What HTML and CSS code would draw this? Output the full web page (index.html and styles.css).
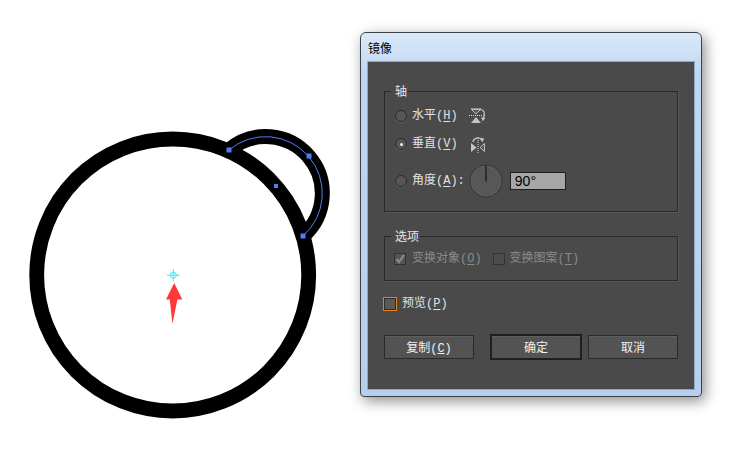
FILE: index.html
```html
<!DOCTYPE html>
<html lang="zh">
<head>
<meta charset="utf-8">
<title>镜像</title>
<link rel="stylesheet" href="styles.css">
</head>
<body>
<div class="page">
  <svg class="art" width="360" height="476" viewBox="0 0 360 476">
    <circle cx="172.7" cy="275" r="136" fill="none" stroke="#000" stroke-width="14.8"/>
    <path d="M229 150 A56.73 56.73 0 0 1 303 236" fill="none" stroke="#000" stroke-width="15"/>
    <path d="M229 150 A56.73 56.73 0 0 1 303 236" fill="none" stroke="#4f7ef2" stroke-width="1"/>
    <rect x="226.5" y="147.5" width="5" height="5" fill="#4f7ef2"/>
    <rect x="306.5" y="153.5" width="5" height="5" fill="#4f7ef2"/>
    <rect x="300.5" y="233.5" width="5" height="5" fill="#4f7ef2"/>
    <rect x="274" y="184" width="4" height="4" fill="#4f7ef2"/>
    <g stroke="#3ee6f2" stroke-width="1" fill="none">
      <circle cx="173.3" cy="275.2" r="3"/>
      <line x1="167" y1="275.2" x2="179.6" y2="275.2"/>
      <line x1="173.3" y1="269" x2="173.3" y2="281.4"/>
    </g>
    <polygon points="174.2,283 182.3,299.5 177.4,299.5 172.4,324 169.8,299.5 166,299.5" fill="#ff3838"/>
  </svg>

  <div class="dialog">
    <div class="titlebar">镜像</div>
    <div class="panel">
      <fieldset class="group axis">
        <legend>轴</legend>
        <div class="row row-h">
          <span class="radio"></span>
          <span class="label">水平(<u>H</u>)</span>
          <svg class="icon icon-h" width="17" height="16" viewBox="0 0 17 16">
            <line x1="2" y1="1" x2="12" y2="1" stroke="#d8d8d8" stroke-width="1"/>
            <polygon points="2.5,1.5 11.5,1.5 7,6" fill="#5c5c5c" stroke="#bdbdbd" stroke-width="1"/>
            <line x1="0" y1="7.5" x2="13" y2="7.5" stroke="#e0e0e0" stroke-width="1" stroke-dasharray="1 1"/>
            <polygon points="2,15 12,15 7,9" fill="#c4c4c4"/>
            <path d="M11 1.5 C15 1.5 16.5 5 14.6 10" fill="none" stroke="#c8c8c8" stroke-width="1.2"/>
            <polygon points="12.2,9.2 16.4,10 13.6,13.2" fill="#c8c8c8"/>
          </svg>
        </div>
        <div class="row row-v">
          <span class="radio checked"></span>
          <span class="label">垂直(<u>V</u>)</span>
          <svg class="icon icon-v" width="17" height="18" viewBox="0 0 17 18">
            <path d="M4 7 C4.5 3 9.5 1.5 13 4.5" fill="none" stroke="#c8c8c8" stroke-width="1.2"/>
            <polygon points="10.6,3.4 15,3.2 13.6,7.2" fill="#c8c8c8"/>
            <polygon points="2,8 2,17 7.5,12.5" fill="#c4c4c4"/>
            <line x1="9" y1="3" x2="9" y2="18" stroke="#e0e0e0" stroke-width="1" stroke-dasharray="1 1"/>
            <polygon points="15.5,8.5 15.5,16.5 11,12.5" fill="#5c5c5c" stroke="#bdbdbd" stroke-width="1"/>
          </svg>
        </div>
        <div class="row row-angle">
          <span class="radio"></span>
          <span class="label">角度(<u>A</u>):</span>
          <svg class="dial" width="34" height="34" viewBox="0 0 34 34">
            <circle cx="17" cy="17" r="16" fill="#575757" stroke="#333" stroke-width="1"/>
            <circle cx="17" cy="17" r="15" fill="none" stroke="#606060" stroke-width="1"/>
            <line x1="17" y1="17.5" x2="17" y2="1.5" stroke="#1c1c1c" stroke-width="1.4"/>
          </svg>
          <span class="field">90°</span>
        </div>
      </fieldset>

      <fieldset class="group options">
        <legend>选项</legend>
        <div class="row">
          <span class="check checked disabled">
            <svg width="10" height="10" viewBox="0 0 10 10"><path d="M1.5 5 L4 8 L9 1" fill="none" stroke="#8c8c8c" stroke-width="2"/></svg>
          </span>
          <span class="label disabled">变换对象(<u>O</u>)</span>
          <span class="check disabled second"></span>
          <span class="label disabled">变换图案(<u>T</u>)</span>
        </div>
      </fieldset>

      <div class="preview">
        <span class="check focus"></span>
        <span class="label">预览(<u>P</u>)</span>
      </div>

      <div class="buttons">
        <button class="btn">复制(<u>C</u>)</button>
        <button class="btn default">确定</button>
        <button class="btn cancel">取消</button>
      </div>
    </div>
  </div>
</div>
</body>
</html>
```

FILE: styles.css
```css
html, body {
  margin: 0;
  padding: 0;
  background: #ffffff;
}

body {
  font-family: "Liberation Mono", "Noto Sans CJK SC", monospace;
  font-size: 12px;
}

.page {
  display: flex;
  align-items: flex-start;
  width: 741px;
  height: 476px;
  overflow: hidden;
}

.art {
  flex: none;
  display: block;
}

.dialog {
  flex: none;
  margin-top: 32px;
  width: 342px;
  height: 365px;
  box-sizing: border-box;
  border: 1px solid #3a414c;
  border-radius: 6px 6px 4px 4px;
  background: linear-gradient(180deg, #dbe9f9 0px, #cde0f6 20px, #c0d7f1 40px, #b6cfec 100%);
  padding: 0 6px 6px;
  box-shadow: 3px 4px 14px rgba(0, 0, 0, 0.45);
  display: flex;
  flex-direction: column;
}

.titlebar {
  height: 28px;
  display: flex;
  align-items: center;
  padding-left: 1px;
  box-sizing: border-box;
  font-family: "Noto Sans CJK SC", sans-serif;
  font-size: 12px;
  color: #000;
}

.panel {
  flex: 1;
  box-sizing: border-box;
  border: 1px solid #8ea8c6;
  background: #4a4a4a;
  padding: 0 16px;
  display: flex;
  flex-direction: column;
  color: #e2e2e2;
}

.group {
  flex: none;
  margin: 0;
  border: 1px solid #2a2a2a;
  box-shadow: 1px 1px 0 #585858;
  padding: 0 0 0 6px;
  min-inline-size: 0;
}

.group legend {
  padding: 0 1px 0 4px;
  line-height: 14px;
  height: 14px;
  font-family: "Noto Sans CJK SC", sans-serif;
  color: #e6e6e6;
}

.axis {
  margin-top: 22px;
  padding-top: 8px;
  padding-bottom: 13px;
}

.row {
  display: flex;
  align-items: center;
  height: 20px;
  padding-left: 4px;
}

.axis .row-v {
  margin-top: 8px;
}

.axis .row-angle {
  height: 34px;
  margin-top: 10px;
}

.label {
  white-space: nowrap;
  line-height: 14px;
}

.label u {
  text-underline-offset: 2px;
}

.radio {
  flex: none;
  width: 12px;
  height: 12px;
  box-sizing: border-box;
  border-radius: 50%;
  border: 1px solid #2a2a2a;
  background: #565656;
  box-shadow: 0 1px 0 #5e5e5e;
  margin-right: 5px;
  display: flex;
  align-items: center;
  justify-content: center;
}

.radio.checked::after {
  content: "";
  width: 3px;
  height: 3px;
  border-radius: 50%;
  background: #f0f0f0;
}

.icon {
  flex: none;
  margin-left: 11px;
  display: block;
}

.dial {
  flex: none;
  display: block;
  margin-left: 4px;
}

.field {
  flex: none;
  margin-left: 7px;
  width: 56px;
  height: 18px;
  box-sizing: border-box;
  border: 1px solid #1e1e1e;
  background: #a6a6a6;
  color: #000;
  font-family: "Liberation Sans", sans-serif;
  font-size: 14px;
  line-height: 16px;
  padding-left: 4px;
}

.options {
  margin-top: 17px;
  padding-top: 8px;
  padding-bottom: 13px;
}

.options .row {
  height: 16px;
  padding-left: 3px;
}

.check {
  flex: none;
  width: 12px;
  height: 12px;
  box-sizing: border-box;
  border: 1px solid #333;
  background: #4c4c4c;
  margin-right: 6px;
  display: flex;
  align-items: center;
  justify-content: center;
}

.check.checked {
  background: #555;
}

.check.second {
  margin-left: 11px;
  margin-right: 5px;
}

.label.disabled {
  color: #8a8a8a;
}

.preview {
  display: flex;
  align-items: center;
  margin-top: 16px;
  margin-left: -1px;
  height: 14px;
}

.check.focus {
  width: 14px;
  height: 14px;
  border: 1px solid #e8801e;
  background: #595959;
  box-shadow: inset 0 0 0 1px #2c2c2c;
  margin-right: 5px;
}

.buttons {
  display: flex;
  align-items: center;
  margin-top: 23px;
  height: 26px;
}

.btn {
  flex: none;
  width: 90px;
  height: 24px;
  box-sizing: border-box;
  border: 1px solid #2a2a2a;
  background: #535353;
  box-shadow: inset 0 1px 0 #5e5e5e;
  color: #f2f2f2;
  font-family: "Liberation Mono", "Noto Sans CJK SC", monospace;
  font-size: 12px;
  padding: 0;
  margin: 0;
}

.btn.default {
  width: 92px;
  height: 26px;
  border: 2px solid #1f1f1f;
  margin-left: 16px;
}

.btn.cancel {
  margin-left: 6px;
}
```
